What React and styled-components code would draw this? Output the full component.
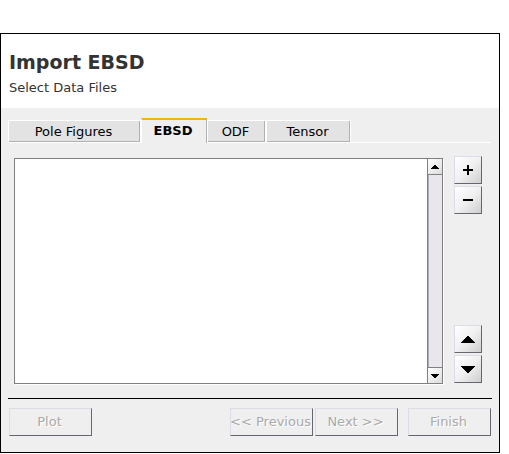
import React, { useState } from "react";
import styled, { createGlobalStyle, css } from "styled-components";

const GlobalStyle = createGlobalStyle`
  *, *::before, *::after { box-sizing: border-box; }
  body {
    margin: 0;
    background: #fff;
    color: #000;
    font-family: "DejaVu Sans", Verdana, sans-serif;
    font-size: 13px;
    line-height: 16px;
  }
  button { font: inherit; color: inherit; }
`;

const Dialog = styled.main`
  margin: 33px 9px 0 0;
  border: 1px solid #000;
  background: #efefef;
`;

const Header = styled.header`
  padding: 16px 8px 12px;
  background: #fff;
  color: #333;
`;

const Title = styled.h1`
  margin: 0;
  font-size: 19px;
  line-height: 24px;
  font-weight: bold;
`;

const Subtitle = styled.p`
  margin: 6px 0 0;
  line-height: 16px;
`;

const TabList = styled.div`
  display: flex;
  align-items: flex-end;
  margin: 10px 8px 0 7px;
`;

const Tab = styled.button`
  flex: none;
  width: ${({ $width }) => $width}px;
  height: 23px;
  padding: 0 2px 0 0;
  border: 1px solid #fff;
  background: #e3e3e3;
  box-shadow: inset -1px -1px #b0b0b0;
  text-align: center;
  ${({ $active }) =>
    $active &&
    css`
      height: 25px;
      padding-bottom: 2px;
      border-top: 2px solid #edb800;
      border-right: 1px solid #b0b0b0;
      border-bottom: 0;
      background: #efefef;
      box-shadow: none;
      font-weight: bold;
    `}
`;

const TabRule = styled.span`
  flex: 1;
  height: 1px;
  background: #fff;
`;

const Panel = styled.section`
  display: flex;
  gap: 11px;
  margin: 13px 17px 0 13px;
`;

const FileBox = styled.div`
  flex: 1;
  display: flex;
  height: 226px;
  margin-top: 2px;
  border: 1px solid #808080;
  background: #fff;
  box-shadow: 1px 1px #fff;
`;

const FileList = styled.ul`
  flex: 1;
  margin: 0;
  padding: 0;
  list-style: none;
`;

const ScrollBar = styled.div`
  display: flex;
  flex-direction: column;
  justify-content: space-between;
  width: 15px;
  border-left: 1px solid #808080;
  background: #e9e7ed;
  box-shadow: inset 1px 0 #b0aeb4;
`;

const ScrollButton = styled.button`
  display: grid;
  place-items: center;
  width: 14px;
  height: 16px;
  padding: 0;
  border: 0;
  background: linear-gradient(135deg, #fff, #dcdcdc);
  ${({ $end }) =>
    $end
      ? css`border-top: 1px solid #808080;`
      : css`border-bottom: 1px solid #808080;`}
`;

const SideButtons = styled.div`
  display: flex;
  flex-direction: column;
  justify-content: space-between;
  padding-bottom: 1px;
`;

const ButtonPair = styled.div`
  display: grid;
  gap: 2px;
`;

const bevel = css`
  height: 28px;
  border: 1px solid #dcdce6;
  border-right-color: #666670;
  border-bottom-color: #666670;
`;

const IconButton = styled.button`
  ${bevel}
  display: grid;
  place-items: center;
  width: 28px;
  padding: 0;
  background: linear-gradient(135deg, #fff, #f0f0f0 50%, #cecece);
`;

const Footer = styled.footer`
  display: flex;
  gap: 2px;
  margin: 14px 7px 0;
  padding: 9px 1px 16px;
  border-top: 1px solid #000;
`;

const ActionButton = styled.button`
  ${bevel}
  flex: 0 0 83px;
  min-width: 0;
  width: 83px;
  display: flex;
  align-items: center;
  justify-content: center;
  padding: 0 2px 0 0;
  background: #efefef;
  color: #aaa;
  text-shadow: 1px 1px #fff;
  white-space: nowrap;
  margin-left: ${({ $after }) => ($after ? "8px" : "0")};
`;

const Spacer = styled.span`
  flex: 1;
`;

const Glyph = styled.svg`
  display: block;
  fill: #000;
  shape-rendering: crispEdges;
`;

const stairs = (rows) =>
  Array.from({ length: rows }, (_, i) => `M${rows - 1 - i} ${i}h${2 * i + 2}v1h-${2 * i + 2}z`).join("");

const Arrow = ({ rows, down }) => (
  <Glyph width={rows * 2} height={rows} viewBox={`0 0 ${rows * 2} ${rows}`} aria-hidden="true">
    <path d={stairs(rows)} transform={down ? `translate(0 ${rows}) scale(1 -1)` : undefined} />
  </Glyph>
);

const Sign = ({ plus }) => (
  <Glyph width="10" height="10" viewBox="0 0 10 10" aria-hidden="true">
    <path d={plus ? "M0 4H4V0H6V4H10V6H6V10H4V6H0z" : "M0 4H10V6H0z"} />
  </Glyph>
);

const tabs = [
  { name: "Pole Figures", width: 133 },
  { name: "EBSD", width: 66 },
  { name: "ODF", width: 59 },
  { name: "Tensor", width: 85 },
];

export default function App() {
  const [active, setActive] = useState("EBSD");
  return (
    <>
      <GlobalStyle />
      <Dialog>
        <Header>
          <Title>Import EBSD</Title>
          <Subtitle>Select Data Files</Subtitle>
        </Header>
        <TabList role="tablist">
          {tabs.map(({ name, width }) => (
            <Tab
              key={name}
              type="button"
              role="tab"
              aria-selected={active === name}
              $active={active === name}
              $width={width}
              onClick={() => setActive(name)}
            >
              {name}
            </Tab>
          ))}
          <TabRule />
        </TabList>
        <Panel role="tabpanel" aria-label={active}>
          <FileBox>
            <FileList aria-label="Data files" />
            <ScrollBar>
              <ScrollButton type="button" aria-label="Scroll up"><Arrow rows={4} /></ScrollButton>
              <ScrollButton type="button" aria-label="Scroll down" $end><Arrow rows={4} down /></ScrollButton>
            </ScrollBar>
          </FileBox>
          <SideButtons>
            <ButtonPair>
              <IconButton type="button" aria-label="Add file"><Sign plus /></IconButton>
              <IconButton type="button" aria-label="Remove file"><Sign /></IconButton>
            </ButtonPair>
            <ButtonPair>
              <IconButton type="button" aria-label="Move up"><Arrow rows={7} /></IconButton>
              <IconButton type="button" aria-label="Move down"><Arrow rows={7} down /></IconButton>
            </ButtonPair>
          </SideButtons>
        </Panel>
        <Footer>
          <ActionButton type="button" disabled>Plot</ActionButton>
          <Spacer />
          <ActionButton type="button" disabled>{"<< Previous"}</ActionButton>
          <ActionButton type="button" disabled>{"Next >>"}</ActionButton>
          <ActionButton type="button" disabled $after>Finish</ActionButton>
        </Footer>
      </Dialog>
    </>
  );
}
